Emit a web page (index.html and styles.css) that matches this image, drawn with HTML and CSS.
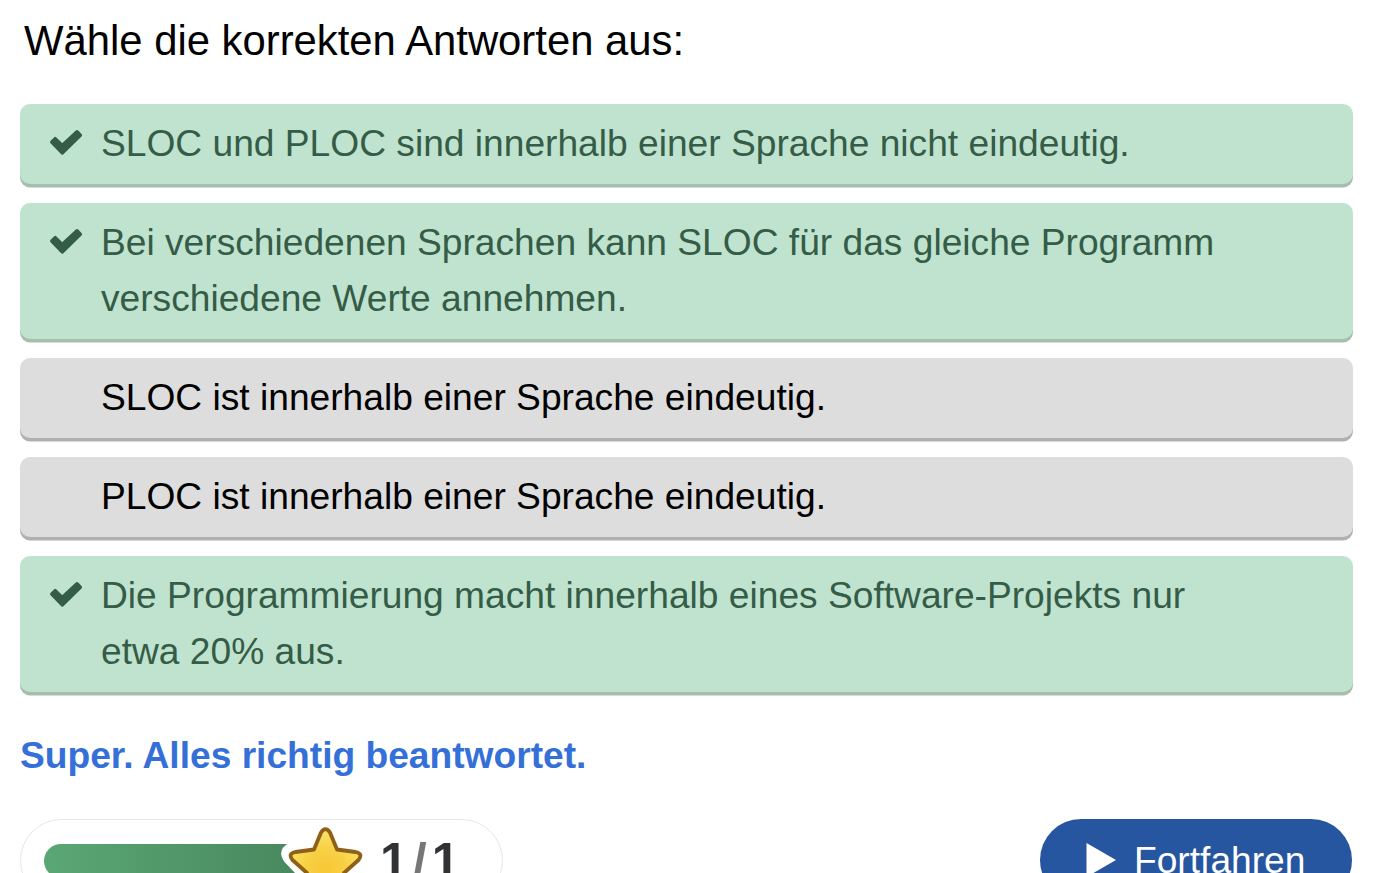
FILE: index.html
```html
<!DOCTYPE html>
<html lang="de">
<head>
<meta charset="utf-8">
<title>Quiz</title>
<link rel="stylesheet" href="styles.css">
</head>
<body>
<main class="quiz">
  <h1 class="question">Wähle die korrekten Antworten aus:</h1>
  <ul class="answers">
    <li class="answer correct"><svg class="check" viewBox="0 0 34 28"><path class="mark" d="M2.800 14 6.200 10.700 13.200 17.600 28 3.800 31.300 7.200 13.200 24.900Z"/></svg><span>SLOC und PLOC sind innerhalb einer Sprache nicht eindeutig.</span></li>
    <li class="answer correct"><svg class="check" viewBox="0 0 34 28"><path class="mark" d="M2.800 14 6.200 10.700 13.200 17.600 28 3.800 31.300 7.200 13.200 24.900Z"/></svg><span>Bei verschiedenen Sprachen kann SLOC für das gleiche Programm verschiedene Werte annehmen.</span></li>
    <li class="answer"><span>SLOC ist innerhalb einer Sprache eindeutig.</span></li>
    <li class="answer"><span>PLOC ist innerhalb einer Sprache eindeutig.</span></li>
    <li class="answer correct"><svg class="check" viewBox="0 0 34 28"><path class="mark" d="M2.800 14 6.200 10.700 13.200 17.600 28 3.800 31.300 7.200 13.200 24.900Z"/></svg><span>Die Programmierung macht innerhalb eines Software-Projekts nur etwa 20% aus.</span></li>
  </ul>
  <p class="feedback">Super. Alles richtig beantwortet.</p>
  <div class="footer">
    <div class="score">
      <div class="bar"></div>
      <svg class="star" viewBox="0 0 88 84">
        <defs><radialGradient id="gold" cx="50%" cy="58%" r="55%"><stop offset="0" stop-color="#f7c736"/><stop offset=".5" stop-color="#f8cf43"/><stop offset="1" stop-color="#fbe266"/></radialGradient></defs>
        <path class="halo" d="M43 0 7 19Q-6 26 2.500 38L13 49V84H76L86 36 60 16Z"/>
        <path class="body" fill="url(#gold)" d="M39 8.500Q43.500 1.800 48 8.500L55 25.500 73.500 28Q81.500 29.500 76.500 36L62 49 66 70Q66.500 77 60 74L43.500 64 27 74Q20.500 77 21 70L25 49 10.500 36Q5.500 29.500 13.500 28L32 25.500Z"/>
      </svg>
      <div class="points"><span>1</span><span class="slash">/</span><span>1</span></div>
    </div>
    <button class="continue"><svg class="play" viewBox="0 0 30 34"><path d="M.5 0 30 17 .5 34Z"/></svg><span>Fortfahren</span></button>
  </div>
</main>
</body>
</html>
```
FILE: styles.css
```css
* { box-sizing: border-box; }
html, body { height: 100%; }
body {
  margin: 0;
  overflow: hidden;
  background: #fff;
  color: #000;
  font-family: "Liberation Sans", Arial, sans-serif;
  font-size: 37.17px;
  line-height: 56px;
}
.quiz { padding: 13px 21px 0 20px; }
.question {
  margin: 0 0 35px;
  padding-left: 4px;
  font-size: 41.82px;
  font-weight: 400;
  line-height: 56px;
}
.answers {
  display: flex;
  flex-direction: column;
  gap: 19px;
  margin: 0;
  padding: 0;
  list-style: none;
}
.answer {
  display: flex;
  padding: 11px 112px 13px 81px;
  border-radius: 10px;
  background: #ddd;
  box-shadow: 0 3.5px 0 #b0b0b0;
}
.correct {
  padding-left: 29px;
  background: #bfe3cf;
  box-shadow: 0 3.5px 0 #a6bdb0;
  color: #355c46;
}
.check {
  flex: none;
  width: 34px;
  height: 28px;
  margin: 13px 18px 0 0;
}
.mark {
  fill: #355c46;
  stroke: #355c46;
  stroke-width: 3.5;
  stroke-linejoin: round;
}
.feedback {
  margin: 35px 0 36px;
  color: #3470d8;
  font-weight: 700;
}
.footer {
  display: flex;
  justify-content: space-between;
  height: 83px;
  margin-right: 1px;
}
.score {
  display: flex;
  width: 483px;
  height: 83px;
  padding-left: 23px;
  border: 1px solid #e6e6e6;
  border-radius: 42px;
}
.bar {
  flex: none;
  width: 280px;
  height: 34px;
  margin-top: 24px;
  border-radius: 17px;
  background: linear-gradient(90deg, #5aa774, #47855c);
}
.star {
  flex: none;
  width: 88px;
  height: 84px;
  margin: 4px 0 0 -42px;
  overflow: visible;
}
.halo { fill: #fff; }
.body { stroke: #8f6017; stroke-width: 3.8; stroke-linejoin: round; }
.points {
  display: flex;
  gap: 5px;
  margin: 13px 0 0 10px;
  color: #303234;
  font-size: 50px;
  font-weight: 700;
}
.slash { color: #777; }
.continue {
  display: flex;
  width: 312px;
  height: 82px;
  padding: 13px 0 0 46px;
  border: 0;
  border-radius: 41px;
  background: #2756a0;
  color: #fff;
  font: inherit;
}
.play {
  flex: none;
  width: 30px;
  height: 34px;
  margin: 11px 18px 0 0;
  fill: #fff;
}
```
